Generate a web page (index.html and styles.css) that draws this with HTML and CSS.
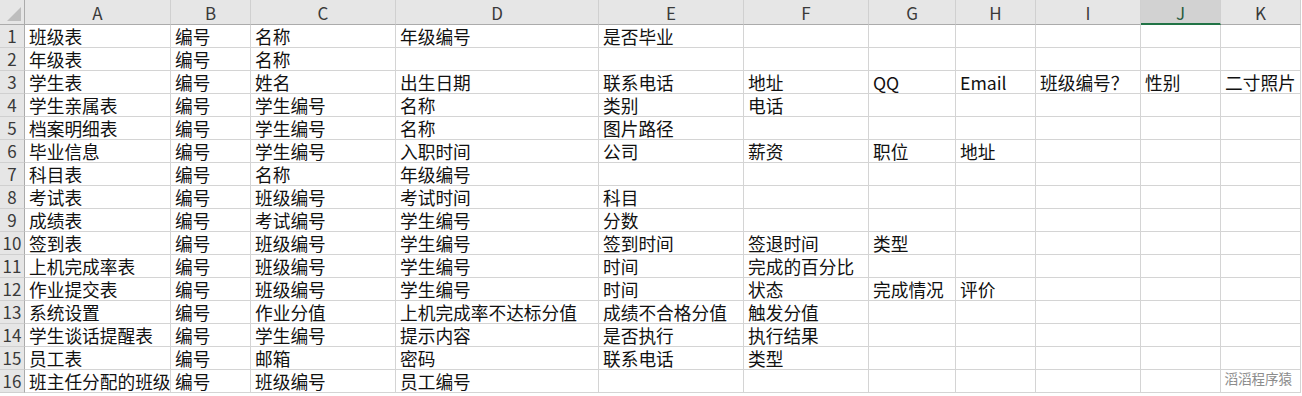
FILE: index.html
```html
<!DOCTYPE html>
<html lang="zh">
<head>
<meta charset="utf-8">
<title>Sheet</title>
<link rel="stylesheet" href="styles.css">
</head>
<body>
<div class="sheet">
  <div class="grid">
    <div class="corner"><div class="tri"></div></div>
    <div class="ch">A</div><div class="ch">B</div><div class="ch">C</div><div class="ch">D</div><div class="ch">E</div><div class="ch">F</div><div class="ch">G</div><div class="ch">H</div><div class="ch">I</div><div class="ch sel">J</div><div class="ch">K</div>

    <div class="rh">1</div><div class="c">班级表</div><div class="c">编号</div><div class="c">名称</div><div class="c">年级编号</div><div class="c">是否毕业</div><div class="c"></div><div class="c"></div><div class="c"></div><div class="c"></div><div class="c"></div><div class="c"></div>
    <div class="rh">2</div><div class="c">年级表</div><div class="c">编号</div><div class="c">名称</div><div class="c"></div><div class="c"></div><div class="c"></div><div class="c"></div><div class="c"></div><div class="c"></div><div class="c"></div><div class="c"></div>
    <div class="rh">3</div><div class="c">学生表</div><div class="c">编号</div><div class="c">姓名</div><div class="c">出生日期</div><div class="c">联系电话</div><div class="c">地址</div><div class="c">QQ</div><div class="c">Email</div><div class="c">班级编号？</div><div class="c">性别</div><div class="c">二寸照片</div>
    <div class="rh">4</div><div class="c">学生亲属表</div><div class="c">编号</div><div class="c">学生编号</div><div class="c">名称</div><div class="c">类别</div><div class="c">电话</div><div class="c"></div><div class="c"></div><div class="c"></div><div class="c"></div><div class="c"></div>
    <div class="rh">5</div><div class="c">档案明细表</div><div class="c">编号</div><div class="c">学生编号</div><div class="c">名称</div><div class="c">图片路径</div><div class="c"></div><div class="c"></div><div class="c"></div><div class="c"></div><div class="c"></div><div class="c"></div>
    <div class="rh">6</div><div class="c">毕业信息</div><div class="c">编号</div><div class="c">学生编号</div><div class="c">入职时间</div><div class="c">公司</div><div class="c">薪资</div><div class="c">职位</div><div class="c">地址</div><div class="c"></div><div class="c"></div><div class="c"></div>
    <div class="rh">7</div><div class="c">科目表</div><div class="c">编号</div><div class="c">名称</div><div class="c">年级编号</div><div class="c"></div><div class="c"></div><div class="c"></div><div class="c"></div><div class="c"></div><div class="c"></div><div class="c"></div>
    <div class="rh">8</div><div class="c">考试表</div><div class="c">编号</div><div class="c">班级编号</div><div class="c">考试时间</div><div class="c">科目</div><div class="c"></div><div class="c"></div><div class="c"></div><div class="c"></div><div class="c"></div><div class="c"></div>
    <div class="rh">9</div><div class="c">成绩表</div><div class="c">编号</div><div class="c">考试编号</div><div class="c">学生编号</div><div class="c">分数</div><div class="c"></div><div class="c"></div><div class="c"></div><div class="c"></div><div class="c"></div><div class="c"></div>
    <div class="rh">10</div><div class="c">签到表</div><div class="c">编号</div><div class="c">班级编号</div><div class="c">学生编号</div><div class="c">签到时间</div><div class="c">签退时间</div><div class="c">类型</div><div class="c"></div><div class="c"></div><div class="c"></div><div class="c"></div>
    <div class="rh">11</div><div class="c">上机完成率表</div><div class="c">编号</div><div class="c">班级编号</div><div class="c">学生编号</div><div class="c">时间</div><div class="c">完成的百分比</div><div class="c"></div><div class="c"></div><div class="c"></div><div class="c"></div><div class="c"></div>
    <div class="rh">12</div><div class="c">作业提交表</div><div class="c">编号</div><div class="c">班级编号</div><div class="c">学生编号</div><div class="c">时间</div><div class="c">状态</div><div class="c">完成情况</div><div class="c">评价</div><div class="c"></div><div class="c"></div><div class="c"></div>
    <div class="rh">13</div><div class="c">系统设置</div><div class="c">编号</div><div class="c">作业分值</div><div class="c">上机完成率不达标分值</div><div class="c">成绩不合格分值</div><div class="c">触发分值</div><div class="c"></div><div class="c"></div><div class="c"></div><div class="c"></div><div class="c"></div>
    <div class="rh">14</div><div class="c">学生谈话提醒表</div><div class="c">编号</div><div class="c">学生编号</div><div class="c">提示内容</div><div class="c">是否执行</div><div class="c">执行结果</div><div class="c"></div><div class="c"></div><div class="c"></div><div class="c"></div><div class="c"></div>
    <div class="rh">15</div><div class="c">员工表</div><div class="c">编号</div><div class="c">邮箱</div><div class="c">密码</div><div class="c">联系电话</div><div class="c">类型</div><div class="c"></div><div class="c"></div><div class="c"></div><div class="c"></div><div class="c"></div>
    <div class="rh">16</div><div class="c">班主任分配的班级</div><div class="c">编号</div><div class="c">班级编号</div><div class="c">员工编号</div><div class="c"></div><div class="c"></div><div class="c"></div><div class="c"></div><div class="c"></div><div class="c"></div><div class="c"></div>
  </div>
  <div class="watermark">滔滔程序猿</div>
</div>
</body>
</html>
```

FILE: styles.css
```css
* { box-sizing: border-box; }
html, body { margin: 0; padding: 0; background: #fff; }
body { overflow: hidden; }

.sheet {
  position: relative;
  width: 1302px;
  height: 396px;
  overflow: hidden;
  font-family: "Noto Sans CJK SC", "Noto Sans", sans-serif;
}

.grid {
  display: grid;
  grid-template-columns: 25px 146px 80px 145px 203px 145px 125px 87px 80px 105px 80px 80px;
  grid-template-rows: 25px repeat(16, 23px);
}

.corner {
  background: #e6e6e6;
  border-right: 1px solid #ababab;
  border-bottom: 1px solid #ababab;
  display: flex;
  justify-content: flex-end;
  align-items: flex-end;
  padding: 0 3px 3px 0;
}
.tri {
  width: 0;
  height: 0;
  border-left: 14px solid transparent;
  border-bottom: 14px solid #bdbdbd;
}

.ch {
  background: #e6e6e6;
  border-right: 1px solid #d0d0d0;
  border-bottom: 1px solid #ababab;
  display: flex;
  justify-content: center;
  align-items: center;
  font-size: 17px;
  color: #3a3a3a;
  line-height: 1;
  padding-top: 1px;
}
.ch.sel {
  background: #d2d2d2;
  border-bottom: 2px solid #217346;
  color: #2a5a3e;
  padding-top: 2px;
}

.rh {
  background: #e6e6e6;
  border-right: 1px solid #ababab;
  border-bottom: 1px solid #d0d0d0;
  display: flex;
  justify-content: center;
  align-items: flex-end;
  font-size: 17px;
  line-height: 22px;
  color: #3a3a3a;
}

.c {
  border-right: 1px solid #d4d4d4;
  border-bottom: 1px solid #d4d4d4;
  padding-left: 4px;
  font-size: 17.7px;
  line-height: 22px;
  color: #111;
  white-space: nowrap;
  display: flex;
  align-items: flex-end;
}

.watermark {
  position: absolute;
  right: 10px;
  bottom: 8px;
  font-size: 13.5px;
  color: #8c8c8c;
  text-shadow: 0 0 1px #fff;
}
```
